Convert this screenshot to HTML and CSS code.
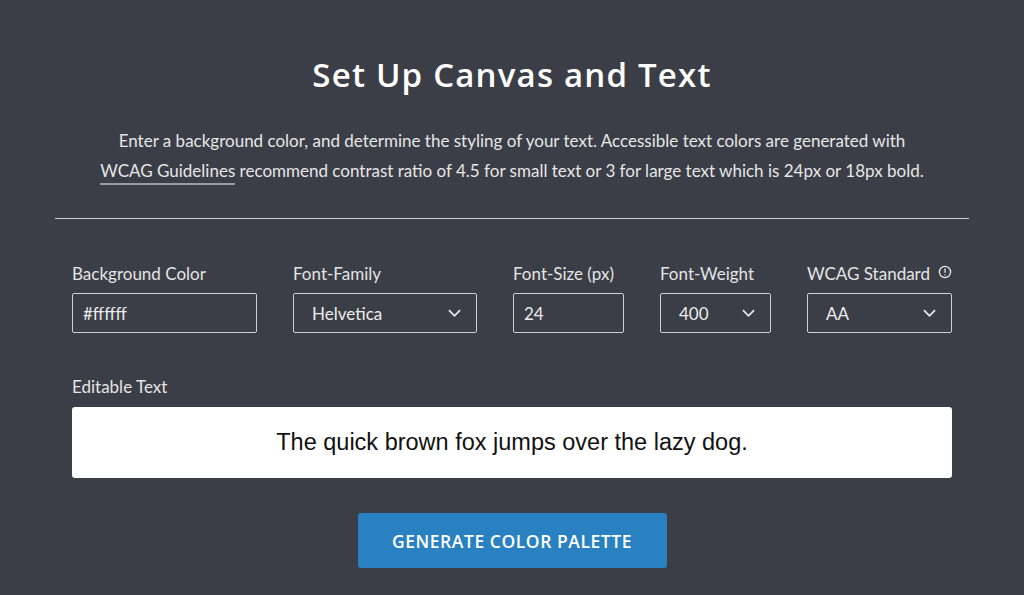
FILE: index.html
```html
<!DOCTYPE html>
<html lang="en">
<head>
  <meta charset="UTF-8" />
  <meta name="viewport" content="width=device-width, initial-scale=1.0"/>
  <title>Set Up Canvas and Text</title>
  <link rel="stylesheet" href="styles.css">
</head>
<body>

  <div class="setup">
    <h1>Set Up Canvas and Text</h1>
    <p class="intro">
      Enter a background color, and determine the styling of your text. Accessible text colors are generated with<br>
      <a href="#" class="guide-link">WCAG Guidelines</a> recommend contrast ratio of 4.5 for small text or 3 for large text which is 24px or 18px bold.
    </p>

    <hr class="divider">

    <div class="form">
      <div class="field-row">
        <div class="field">
          <label for="bgColor">Background Color</label>
          <input type="text" id="bgColor" class="text-input" value="#ffffff">
        </div>
        <div class="field">
          <label>Font-Family</label>
          <div class="select">
            <span>Helvetica</span>
            <svg class="chevron" viewBox="0 0 14 8"><path d="M1 1l6 6 6-6"/></svg>
          </div>
        </div>
        <div class="field">
          <label for="fontSize">Font-Size (px)</label>
          <input type="text" id="fontSize" class="text-input" value="24">
        </div>
        <div class="field">
          <label>Font-Weight</label>
          <div class="select">
            <span>400</span>
            <svg class="chevron" viewBox="0 0 14 8"><path d="M1 1l6 6 6-6"/></svg>
          </div>
        </div>
        <div class="field">
          <label>WCAG Standard
            <svg class="info" viewBox="0 0 14 14"><circle cx="7" cy="7" r="5.6"/><path d="M7 3.6v4.2M7 9.4v1"/></svg>
          </label>
          <div class="select">
            <span>AA</span>
            <svg class="chevron" viewBox="0 0 14 8"><path d="M1 1l6 6 6-6"/></svg>
          </div>
        </div>
      </div>

      <div class="field editable">
        <label>Editable Text</label>
        <div class="preview" contenteditable="true">The quick brown fox jumps over the lazy dog.</div>
      </div>

      <div class="actions">
        <button class="generate-btn">Generate Color Palette</button>
      </div>
    </div>
  </div>

</body>
</html>
```

FILE: styles.css
```css
body {
  margin: 0;
  background: #3b3e46;
  font-family: 'Lato', sans-serif;
  color: #e4e4e4;
}

.setup {
  width: 914px;
  margin: 0 auto;
  padding-top: 53px;
}

h1 {
  margin: 0;
  text-align: center;
  font-family: 'Open Sans', sans-serif;
  font-weight: 600;
  font-size: 33px;
  line-height: 44px;
  color: #ffffff;
  letter-spacing: 1.2px;
}

.intro {
  margin: 29px 0 0;
  text-align: center;
  font-size: 17px;
  line-height: 30px;
  color: #e6e6e6;
}

.guide-link {
  color: #e6e6e6;
  text-decoration: none;
  border-bottom: 2px solid #9a9ca2;
  padding-bottom: 2px;
}

.divider {
  margin: 32px 0 0;
  border: none;
  border-top: 1px solid #c9cacd;
}

.form {
  padding: 0 17px;
}

.field-row {
  display: grid;
  grid-template-columns: 185px 184px 111px 111px 145px;
  gap: 36px;
  margin-top: 43px;
}

.field label {
  display: flex;
  align-items: center;
  gap: 8px;
  font-size: 17px;
  line-height: 23px;
  color: #e4e4e4;
  margin-bottom: 8px;
}

.text-input,
.select {
  box-sizing: border-box;
  height: 40px;
  width: 100%;
  border: 1px solid #cfd0d3;
  border-radius: 2px;
  background: transparent;
  color: #ececec;
  font-family: 'Lato', sans-serif;
  font-size: 17px;
}

.text-input {
  padding: 0 10px;
  outline: none;
}

.select {
  display: flex;
  align-items: center;
  justify-content: space-between;
  padding: 0 15px 0 18px;
}

.chevron {
  width: 13px;
  height: 8px;
  fill: none;
  stroke: #e8e8e8;
  stroke-width: 1.9;
}

.info {
  width: 14px;
  height: 14px;
  fill: none;
  stroke: #e8e8e8;
  stroke-width: 1.3;
  margin-top: -3px;
}

.editable {
  margin-top: 42px;
}

.editable label {
  margin-bottom: 9px;
}

.preview {
  height: 71px;
  box-sizing: border-box;
  background: #ffffff;
  border-radius: 3px;
  display: flex;
  align-items: center;
  justify-content: center;
  font-family: 'Liberation Sans', Arial, sans-serif;
  font-size: 23.5px;
  color: #111;
  outline: none;
}

.actions {
  display: flex;
  justify-content: center;
  margin-top: 35px;
}

.generate-btn {
  width: 309px;
  height: 55px;
  border: none;
  border-radius: 3px;
  background: #2a81c1;
  color: #ffffff;
  font-family: 'Open Sans', sans-serif;
  font-weight: 600;
  font-size: 17.5px;
  letter-spacing: 0.55px;
  text-transform: uppercase;
  cursor: pointer;
}
```
